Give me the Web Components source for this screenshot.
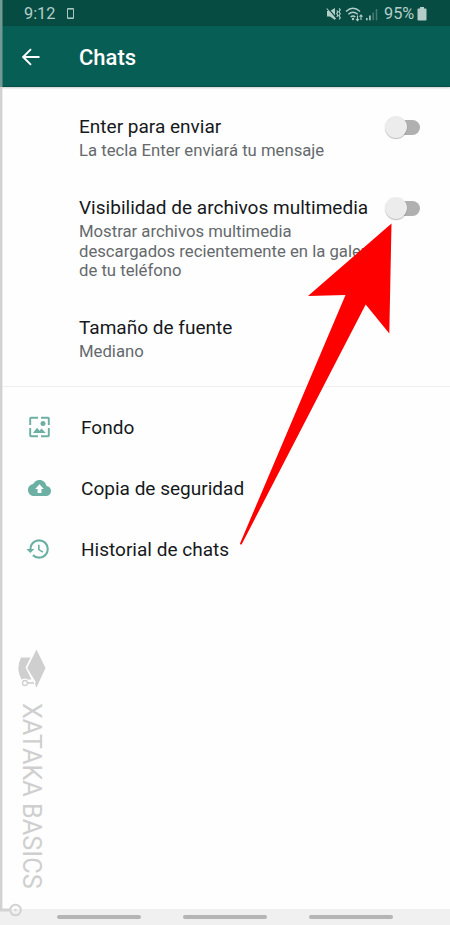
<!DOCTYPE html>
<html lang="es">
<head>
<meta charset="utf-8">
<title>Chats</title>
<style>
html,body{margin:0;height:925px;overflow:hidden;background:#fefefe;font-family:Roboto,"Liberation Sans",sans-serif}
</style>
</head>
<body>
<chat-settings></chat-settings>
<script>
const define = (name, html) => customElements.define(name, class extends HTMLElement {
  constructor() {
    super();
    const t = document.createElement('template');
    t.innerHTML = html;
    this.attachShadow({ mode: 'open' }).append(t.content.cloneNode(true));
  }
});

define('status-bar', `<style>
:host{display:flex;align-items:center;height:26px;box-sizing:border-box;padding:1px 23px 0 24px;background:#074c43;color:#b4cdc8;font-size:16.3px;line-height:24px}
.time{width:31px;white-space:nowrap}.phone{margin-left:11.5px;margin-top:-1px}.icons{margin-left:auto;margin-right:6px}.pct{white-space:nowrap;width:31px}.bat{margin-left:2px}
svg{display:block;flex:none}
</style>
<span class="time">9:12</span>
<svg class="phone" width="7" height="11" viewBox="0 0 7 11"><path d="M.5.5h6v10h-6z" fill="none" stroke="#a9c6c0"/><path d="M1 1.500h5M1 9.500h5" stroke="#a9c6c0" stroke-width=".6"/></svg>
<svg class="icons" width="52" height="16" viewBox="0 0 52 16" fill="none" stroke="#b4cdc8">
<path d="M1 5h3L9 2v12l-5-3.500H1z" fill="#b4cdc8" stroke="none"/><path d="M1.700 2l8.600 10" stroke="#074c43" stroke-width="1.200"/><path d="M.7 2.500l9 10.500" stroke-width="1.100"/><path d="M10.800 4.500l1 1.300-1 1.700 1 1.700-1 1.700M13.200 2.300l1 1.500-1.200 2 1.200 2-1.200 2 1.200 2-1 1.500" stroke-width="1.200"/>
<path d="M20 5.500Q27-1 34 5.500M22.300 8.300Q27 4 31.700 8.300M24.700 11Q27 8.800 29.300 11" stroke-width="1.400"/><circle cx="27" cy="13" r="1.200" fill="#b4cdc8" stroke="none"/><path d="M31.500 9.500v5M30 13l1.500 1.700 1.500-1.700M35 14v-5M33.500 10.700l1.500-1.700 1.500 1.700" stroke-width="1.100"/>
<path d="M40.800 12v2.300M43.900 9.500v4.800" stroke-width="1.600"/><path d="M47.200 6.500v7.800M50.500 3v11.300" stroke="#477c74" stroke-width="1.500"/></svg>
<span class="pct">95%</span>
<svg class="bat" width="10" height="14" viewBox="0 0 10 14"><path d="M3 0h4v1.500h1.500q1 0 1 1V12.500q0 1-1 1h-7q-1 0-1-1v-10q0-1 1-1H3z" fill="#b4cdc8"/></svg>`);

define('app-bar', `<style>
:host{display:flex;align-items:center;height:61px;box-sizing:border-box;padding-left:22px;background:#075e54;color:#fff;border-bottom:1px solid #064f47;box-shadow:0 1px 2px #0003}
h1{margin:4px 0 0 39px;font-size:22px;line-height:28px;font-weight:500}
svg{display:block;margin-top:2px}
</style>
<svg width="18" height="18" viewBox="0 0 18 18" fill="none" stroke="#fff" stroke-width="1.9"><path d="M17.500 9H1.500M9 1.200L1.200 9 9 16.800"/></svg>
<h1><slot></slot></h1>`);

define('toggle-switch', `<style>
:host{display:flex;align-items:center;width:35px;height:22px}
.track{display:flex;align-items:center;width:32px;height:15px;margin-left:3px;border-radius:8px;background:#b0b0b0}
.thumb{flex:none;width:22px;height:22px;margin-left:-3px;border-radius:50%;background:#ececec;box-shadow:0 1px 1px #0004}
</style><div class="track"><div class="thumb"></div></div>`);

define('setting-row', `<style>
:host{display:flex;align-items:flex-start;justify-content:space-between;padding:0 30px 0 79px}
.copy{width:290px;white-space:nowrap}
.title{font-size:19.050px;line-height:24px;color:#16191c}
.sub{margin-top:2px;font-size:16.700px;line-height:19.700px;color:#65696c}
</style><div class="copy"><div class="title"><slot></slot></div><div class="sub"><slot name="sub"></slot></div></div><slot name="control"></slot>`);

define('icon-row', `<style>
:host{display:flex;align-items:center;height:61px;padding-left:27px;font-size:19.050px;line-height:24px;color:#16191c}
.icon{display:flex;width:24px;margin-right:30px}.label{margin-top:3px}
</style><span class="icon"><slot name="icon"></slot></span><span class="label"><slot></slot></span>`);

define('nav-bar', `<style>
:host{display:flex;gap:42px;height:16px;box-sizing:border-box;padding:6px 0 0 57px;background:#f0f0f0}
i{width:84px;height:4px;border-radius:2px;background:#b5b5b5}
</style><i></i><i></i><i></i>`);

define('brand-mark', `<style>
:host{position:absolute;left:0;top:0;width:60px;height:925px;pointer-events:none}
svg{position:absolute;left:0;top:0}
span{position:absolute;left:17px;top:703px;writing-mode:vertical-rl;font-size:25.300px;line-height:28px;color:#cfcfcf;white-space:nowrap}
</style>
<svg width="60" height="925" fill="none">
<path d="M1 0V87" stroke="#729a94" stroke-width="3"/><path d="M1 87V910H9.500" stroke="#d2d2d2" stroke-width="2.800"/>
<circle cx="15.500" cy="910" r="5.300" stroke="#d2d2d2" stroke-width="2"/><circle cx="15.500" cy="910" r="1.200" fill="#d2d2d2"/>
<path d="M36.500 649.500L45.500 668 36.500 687.500 35 684 35.800 682 27.200 668z" fill="#cfcfcf"/>
<path d="M21 657.500H30.500L25.500 667.500 31.500 679.500H27.500Q25.500 677.500 21.500 679.500 15.500 668.500 21 657.500z" fill="#cfcfcf"/>
<circle cx="25" cy="683" r="2.500" stroke="#cfcfcf" stroke-width="1.300"/><path d="M27.500 683H34" stroke="#cfcfcf" stroke-width="1.600"/></svg>
<span>XATAKA BASICS</span>`);

define('pointer-arrow', `<style>
:host{position:absolute;left:0;top:0;width:450px;height:925px;pointer-events:none}
</style><svg width="450" height="925"><path d="M391.500 223.500L389.300 333.500 365.700 304.500 241.700 544.300Q240.500 545.300 240 543.500L345.500 295 308 296z" fill="#fe0000"/></svg>`);

define('chat-settings', `<style>
:host{display:flex;flex-direction:column;position:relative;width:450px;height:925px;background:#fefefe}
main{flex:1}
.prefs{display:flex;flex-direction:column;height:300px;padding-top:28px;box-sizing:border-box;border-bottom:1px solid #f0f0f0}
.a{height:81px}.b{height:120px}
toggle-switch{margin-top:1px}
nav{padding-top:9px}
svg{display:block}
.cloud{margin-left:1px}
.history{flex:none;margin:-1px 0 -1px -2px}
</style>
<status-bar></status-bar><app-bar>Chats</app-bar>
<main><section class="prefs">
<setting-row class="a">Enter para enviar<span slot="sub">La tecla Enter enviará tu mensaje</span><toggle-switch slot="control"></toggle-switch></setting-row>
<setting-row class="b">Visibilidad de archivos multimedia<span slot="sub">Mostrar archivos multimedia<br>descargados recientemente en la galería<br>de tu teléfono</span><toggle-switch slot="control"></toggle-switch></setting-row>
<setting-row>Tamaño de fuente<span slot="sub">Mediano</span></setting-row>
</section>
<nav>
<icon-row><svg slot="icon" width="24" height="24" viewBox="0 0 24 24"><path d="M11 2.700H4Q3.200 2.700 3.200 3.500V10M14 2.700H21Q21.800 2.700 21.800 3.500V10M3.200 13V20.500Q3.200 21.300 4 21.300H11M14 21.300H21Q21.800 21.300 21.800 20.500V13" fill="none" stroke="#6bb0a3" stroke-width="1.900"/><path d="M6 18L10 12.800 12.500 15.800 14.500 13.500 18.800 18z" fill="#6bb0a3"/><circle cx="16" cy="8.500" r="2.500" fill="#6bb0a3"/></svg>Fondo</icon-row>
<icon-row><svg class="cloud" slot="icon" width="23" height="24" viewBox="0 0 24 24" preserveAspectRatio="none"><path fill="#6bb0a3" d="M19.350 10.040C18.670 6.590 15.640 4 12 4 9.110 4 6.600 5.640 5.350 8.040 2.340 8.360 0 10.910 0 14c0 3.310 2.690 6 6 6h13c2.760 0 5-2.240 5-5 0-2.640-2.050-4.780-4.650-4.960zM14 13v4h-4v-4H7.500l4.500-4.800 4.500 4.800z"/></svg>Copia de seguridad</icon-row>
<icon-row><svg class="history" slot="icon" width="26" height="26" viewBox="0 0 24 24"><path fill="#6bb0a3" d="M13 3a9 9 0 0 0-9 9H1.300l3.590 3.590.07.14L8.700 12H6c0-3.870 3.130-7 7-7s7 3.130 7 7-3.130 7-7 7c-1.930 0-3.680-.79-4.940-2.060l-1.420 1.420A8.950 8.950 0 0 0 13 21a9 9 0 0 0 0-18zm-1 5v5l4.280 2.540.72-1.210-3.500-2.080V8H12z"/></svg>Historial de chats</icon-row>
</nav></main>
<nav-bar></nav-bar><brand-mark></brand-mark><pointer-arrow></pointer-arrow>
`);
</script>
</body>
</html>
